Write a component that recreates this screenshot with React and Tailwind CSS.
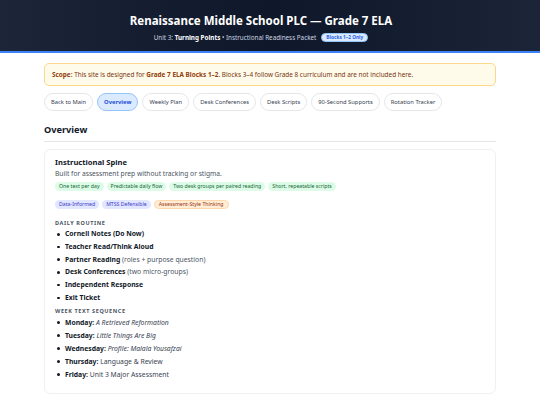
const tabs = [
  'Back to Main',
  'Overview',
  'Weekly Plan',
  'Desk Conferences',
  'Desk Scripts',
  '90-Second Supports',
  'Rotation Tracker',
];

const greenChips = [
  'One text per day',
  'Predictable daily flow',
  'Two desk groups per paired reading',
  'Short, repeatable scripts',
];

const routine = [
  { b: 'Cornell Notes (Do Now)' },
  { b: 'Teacher Read/Think Aloud' },
  { b: 'Partner Reading', t: ' (roles + purpose question)' },
  { b: 'Desk Conferences', t: ' (two micro-groups)' },
  { b: 'Independent Response' },
  { b: 'Exit Ticket' },
];

const week = [
  { d: 'Monday:', t: 'A Retrieved Reformation', i: true },
  { d: 'Tuesday:', t: 'Little Things Are Big', i: true },
  { d: 'Wednesday:', t: 'Profile: Malala Yousafzai', i: true },
  { d: 'Thursday:', t: 'Language & Review' },
  { d: 'Friday:', t: 'Unit 3 Major Assessment' },
];

function Bullet({ children, tall }) {
  return (
    <li className={tall ? 'flex items-center h-[13px]' : 'flex items-center h-[12.7px]'}>
      <span className="w-[2.5px] h-[2.5px] rounded-full bg-[#111827] ml-[2px] mr-[5.5px] shrink-0" />
      <span>{children}</span>
    </li>
  );
}

export default function App() {
  return (
    <div className="min-h-[405px] bg-white text-[#1f2937]" style={{ fontFamily: '"Noto Sans", "Open Sans", sans-serif' }}>
      <header className="h-[53px] bg-gradient-to-r from-[#1c2638] via-[#0f172a] to-[#1b2537] border-b-2 border-[#3b82f6] flex flex-col items-center pt-[12px] pr-[18px]">
        <h1 className="text-white font-bold text-[11.5px] leading-[18px]">
          Renaissance Middle School PLC — Grade 7 ELA
        </h1>
        <div className="mt-[3px] flex items-center gap-[5px] text-[6.3px] text-[#cbd5e1]">
          <span>
            Unit 3: <b className="text-white font-bold">Turning Points</b> • Instructional Readiness Packet
          </span>
          <span className="rounded-full bg-[#dbeafe] text-[#2563eb] font-bold text-[4.8px] px-[4px] h-[9px] flex items-center border border-[#93c5fd]">
            Blocks 1–2 Only
          </span>
        </div>
      </header>

      <main className="w-[452px] mx-auto pt-[10px]">
        <div className="h-[23px] rounded-[5px] bg-[#fffbeb] border border-[#fcd98a] flex items-center px-[7px] text-[6.4px] text-[#78350f]">
          <span>
            <b className="font-bold text-[#92400e]">Scope:</b> This site is designed for{' '}
            <b className="font-bold text-[#92400e]">Grade 7 ELA Blocks 1–2</b>. Blocks 3–4 follow Grade 8 curriculum and are not included here.
          </span>
        </div>

        <nav className="mt-[7px] flex gap-[4px]">
          {tabs.map((t) =>
            t === 'Overview' ? (
              <span
                key={t}
                className="h-[18px] px-[6px] rounded-full border border-[#93c5fd] bg-[#dbeafe] text-[#1d4ed8] font-bold text-[5.8px] flex items-center"
              >
                {t}
              </span>
            ) : (
              <span
                key={t}
                className="h-[18px] px-[6px] rounded-full border border-[#e5e7eb] bg-white text-[#374151] text-[5.8px] flex items-center"
              >
                {t}
              </span>
            )
          )}
        </nav>

        <h2 className="mt-[11px] text-[9.2px] font-bold text-[#111827] leading-[16px] pb-[3px] border-b border-[#e5e7eb]">
          Overview
        </h2>

        <section className="mt-[7px] h-[245px] rounded-[6px] border border-[#eef0f3] px-[10px] pt-[6px]">
          <h3 className="text-[7.6px] font-bold text-[#111827] leading-[12px]">Instructional Spine</h3>
          <p className="text-[6.7px] text-[#4b5563] leading-[11px]">Built for assessment prep without tracking or stigma.</p>

          <div className="mt-[3px] flex gap-[3px]">
            {greenChips.map((c) => (
              <span key={c} className="h-[9px] px-[4px] rounded-full bg-[#dcfce7] text-[#166534] text-[5.2px] flex items-center">
                {c}
              </span>
            ))}
          </div>
          <div className="mt-[9px] flex gap-[3px]">
            <span className="h-[9px] px-[4px] rounded-full bg-[#e0e7ff] text-[#4338ca] text-[5.2px] flex items-center">Data-Informed</span>
            <span className="h-[9px] px-[4px] rounded-full bg-[#e0e7ff] text-[#4338ca] text-[5.2px] flex items-center">MTSS Defensible</span>
            <span className="h-[9px] px-[4px] rounded-full bg-[#ffedd5] text-[#9a3412] text-[5.2px] flex items-center border border-[#fed7aa]">
              Assessment-Style Thinking
            </span>
          </div>

          <div className="mt-[9px] text-[5.5px] font-bold tracking-[0.6px] text-[#4b5563] leading-[10px]">DAILY ROUTINE</div>
          <ul className="text-[6.8px] text-[#4b5563]">
            {routine.map((r) => (
              <Bullet key={r.b}>
                <b className="font-bold text-[#111827]">{r.b}</b>
                {r.t}
              </Bullet>
            ))}
          </ul>

          <div className="mt-[2px] text-[5.5px] font-bold tracking-[0.6px] text-[#4b5563] leading-[10px]">WEEK TEXT SEQUENCE</div>
          <ul className="text-[6.8px] text-[#374151]">
            {week.map((w) => (
              <Bullet key={w.d} tall>
                <b className="font-bold text-[#111827]">{w.d}</b>{' '}
                {w.i ? <i>{w.t}</i> : w.t}
              </Bullet>
            ))}
          </ul>
        </section>
      </main>
    </div>
  );
}
